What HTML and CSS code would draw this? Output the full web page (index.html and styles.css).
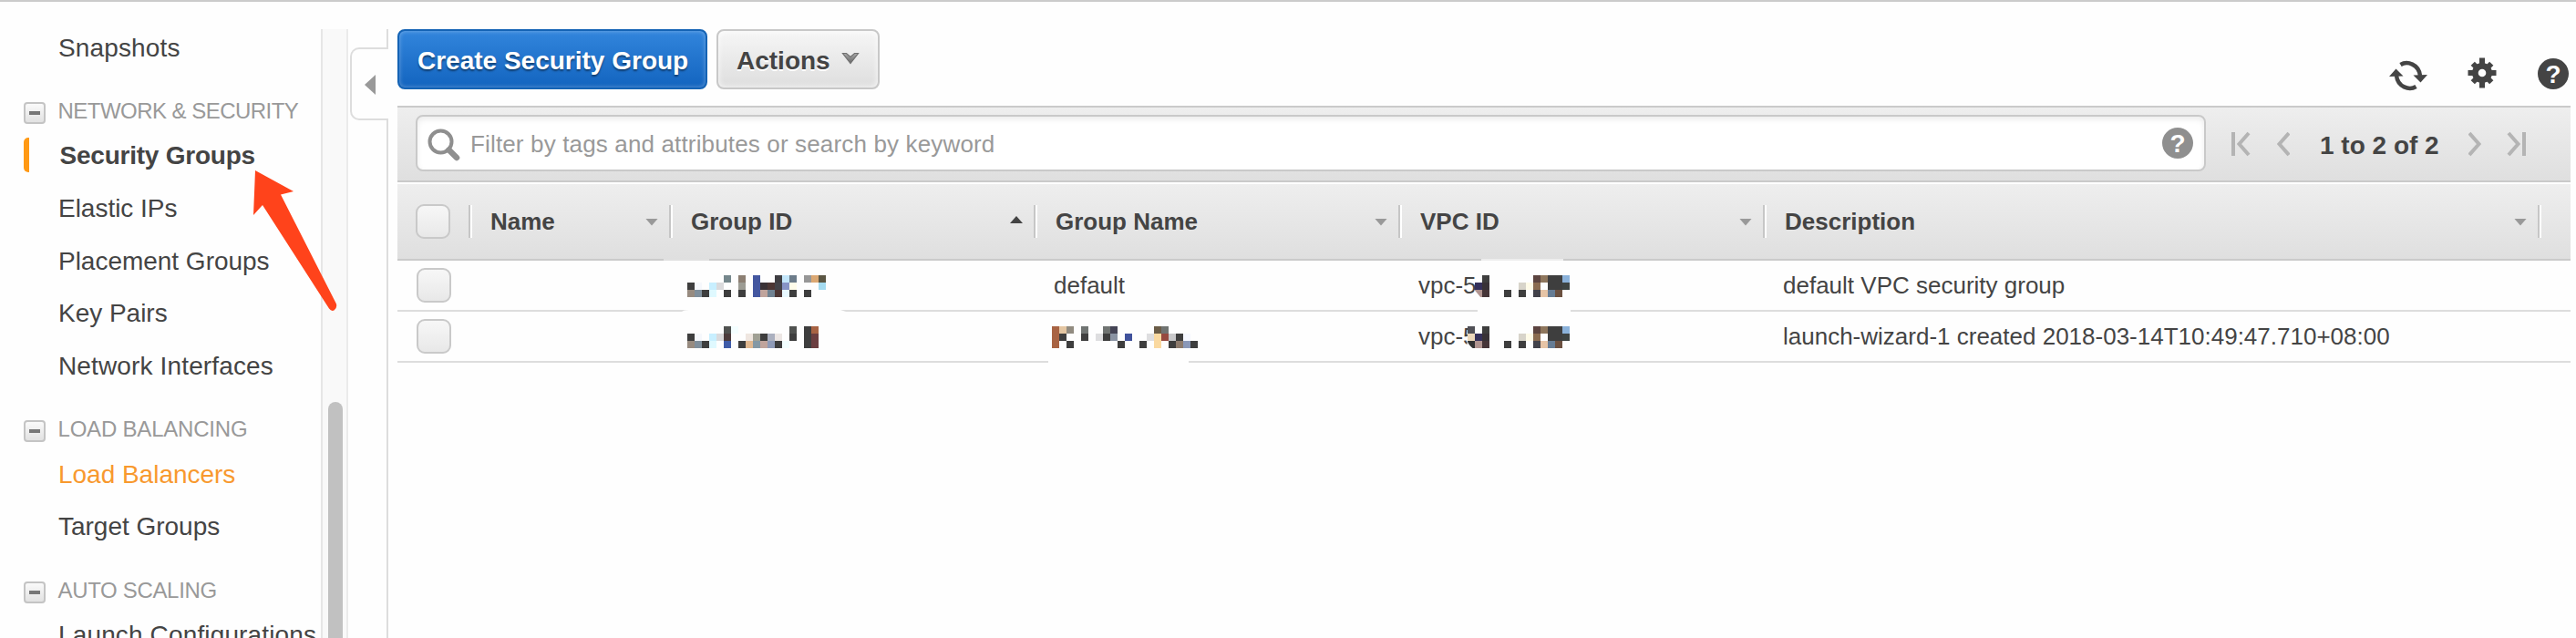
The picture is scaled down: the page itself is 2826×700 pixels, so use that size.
FILE: index.html
```html
<!DOCTYPE html>
<html lang="en">
<head>
<meta charset="utf-8">
<title>Security Groups</title>
<link rel="stylesheet" href="styles.css">
</head>
<body>
<div class="app">
  <nav class="sidebar">
    <a class="nav-item">Snapshots</a>
    <div class="nav-heading"><span class="toggle"></span><span class="ls-network">NETWORK &amp; SECURITY</span></div>
    <a class="nav-item active">Security Groups</a>
    <a class="nav-item tight">Elastic IPs</a>
    <a class="nav-item tight">Placement Groups</a>
    <a class="nav-item tight">Key Pairs</a>
    <a class="nav-item">Network Interfaces</a>
    <div class="nav-heading"><span class="toggle"></span><span class="ls-load">LOAD BALANCING</span></div>
    <a class="nav-item hover tight">Load Balancers</a>
    <a class="nav-item tight">Target Groups</a>
    <div class="nav-heading"><span class="toggle"></span><span class="ls-auto">AUTO SCALING</span></div>
    <a class="nav-item">Launch Configurations</a>
  </nav>
  <div class="scrollbar"><div class="thumb"></div></div>
  <div class="divider">
    <div class="line-top"></div>
    <div class="collapse"><svg width="14" height="24" viewBox="0 0 14 24"><path d="M13 1v22L1 12z" fill="#999"/></svg></div>
    <div class="line-bottom"></div>
  </div>
  <main class="main">
    <div class="toolbar">
      <button class="btn primary">Create Security Group</button>
      <button class="btn">Actions
        <svg class="caret" width="20" height="14" viewBox="0 0 20 14"><defs><linearGradient id="cg" x1="0" x2="0" y1="0" y2="1"><stop offset="0" stop-color="#aaa"/><stop offset="1" stop-color="#666"/></linearGradient></defs><path d="M1.500 1.500h4L10 5.500l4.500-4h4L10 12.500z" fill="url(#cg)" stroke="#707070" stroke-width="1.200"/></svg>
      </button>
      <div class="tools">
        <svg class="i-refresh" width="42" height="34" viewBox="0 0 42 34"><g fill="none" stroke="#444" stroke-width="4.500"><path d="M12.500 5C20 .5 32.500 4.500 34 17"/><path d="M29.500 29C22 33.500 9.500 29.500 8 17"/></g><path d="M26.500 16.500L42 16L34.500 24.500zM15.500 17.500L0 18L7.500 9.500z" fill="#444"/></svg>
        <svg class="i-gear" width="32" height="34" viewBox="-16 -17 32 34"><g fill="#444"><circle r="11"/><rect x="-3" y="-16.500" width="6" height="33"/><rect x="-15.500" y="-3" width="31" height="6"/><g transform="rotate(45)"><rect x="-3" y="-14.500" width="6" height="29"/><rect x="-14.500" y="-3" width="29" height="6"/></g></g><circle r="4.300" fill="#fefefe"/></svg>
        <svg width="34" height="34" viewBox="0 0 34 34"><circle cx="17" cy="17" r="17" fill="#444"/><text x="17" y="27" class="q">?</text></svg>
      </div>
    </div>
    <div class="filterbar">
      <div class="search">
        <svg class="i-search" width="36" height="36" viewBox="0 0 36 36"><circle cx="14.500" cy="14.500" r="12" fill="none" stroke="#8f8f8f" stroke-width="4"/><path d="M23.500 23.500L32 32" stroke="#8f8f8f" stroke-width="6.500" stroke-linecap="round"/></svg>
        <span class="placeholder">Filter by tags and attributes or search by keyword</span>
        <svg width="34" height="34" viewBox="0 0 34 34"><circle cx="17" cy="17" r="17" fill="#8f8f8f"/><text x="17" y="27" class="q">?</text></svg>
      </div>
      <div class="pager">
        <svg width="64" height="28" viewBox="0 0 64 28" class="pg"><path d="M2 1v26M19 2L8.500 14L19 26M63 2L52.500 14L63 26"/></svg>
        <span class="range">1 to 2 of 2</span>
        <svg width="63" height="28" viewBox="0 0 63 28" class="pg"><path d="M1 2L11.500 14L1 26M44 2L54.500 14L44 26M61 1v26"/></svg>
      </div>
    </div>
    <div class="grid head">
      <div class="check-cell"><span class="check"></span></div>
      <div class="th"><span>Name</span><i class="sort"></i></div>
      <div class="th"><span>Group ID</span><i class="sort up"></i></div>
      <div class="th"><span>Group Name</span><i class="sort"></i></div>
      <div class="th"><span>VPC ID</span><i class="sort"></i></div>
      <div class="th wide"><span>Description</span><i class="sort"></i></div>
      <div class="th end"></div>
    </div>
    <div class="grid row">
      <div class="check-cell"><span class="check"></span></div>
      <div class="td"></div>
      <div class="td"><svg class="redact" data-key="id1" width="212" height="60"></svg></div>
      <div class="td">default</div>
      <div class="td">vpc-5<svg class="redact" data-key="vpc1" width="212" height="60"></svg></div>
      <div class="td">default VPC security group</div>
    </div>
    <div class="grid row">
      <div class="check-cell"><span class="check"></span></div>
      <div class="td"></div>
      <div class="td"><svg class="redact" data-key="id2" width="212" height="60"></svg></div>
      <div class="td"><svg class="redact" data-key="name2" width="212" height="60"></svg></div>
      <div class="td">vpc-5<svg class="redact" data-key="vpc2" width="212" height="60"></svg></div>
      <div class="td">launch-wizard-1 created 2018-03-14T10:49:47.710+08:00</div>
    </div>
  </main>
  <svg class="pointer" width="100" height="164" viewBox="275 183 100 164"><path d="M280 187L322 210L308 213.500L369 333.500Q370 338 366.500 340.500Q363.500 342 361 338.500L288 225L278 236z" fill="#ff431b"/></svg>
</div>
<script src="redact.js"></script>
</body>
</html>
```
FILE: styles.css
```css
* { box-sizing: border-box; }
body { margin: 0; background: #fefefe; color: #444; font-family: "Liberation Sans", Arial, sans-serif; }
svg { display: block; flex: none; }
.app { position: relative; display: flex; width: 2826px; height: 700px; overflow: hidden; border-top: 2px solid #cbcbcb; }

.sidebar { width: 352px; flex: none; padding: 21.5px 0 0 26px; }
.nav-item { display: flex; align-items: center; height: 57.6px; padding-left: 38px; font-size: 28px; letter-spacing: .14px; line-height: 57.6px; white-space: nowrap; }
.nav-item.tight { letter-spacing: -.02px; }
.nav-item.active { padding-left: 0; font-weight: bold; letter-spacing: -.23px; }
.nav-item.active::before { content: ""; width: 6px; height: 38px; margin: 0 33.500px 3px 0; background: #ff9914; border-radius: 5px 0 0 5px; }
.nav-item.hover { color: #f8992e; }
.nav-heading { display: flex; align-items: center; height: 40.600px; margin-top: 20.800px; font-size: 24px; line-height: 40.600px; color: #999; white-space: nowrap; }
.ls-network { letter-spacing: -.53px; }
.ls-load { letter-spacing: -.2px; }
.ls-auto { letter-spacing: -.33px; }
.toggle { display: flex; align-items: center; justify-content: center; width: 24px; height: 24px; margin: 3px 13.500px 0 0; border: 2px solid #c4c4c4; border-radius: 4px; background: linear-gradient(#fafafa, #e2e2e2); }
.toggle::before { content: ""; width: 12px; height: 4px; background: #777; }

.scrollbar { width: 30px; flex: none; margin-top: 30px; padding: 409px 0 0 6px; background: #f9f9f9; border-left: 2px solid #e6e6e6; border-right: 2px solid #ebebeb; }
.thumb { width: 16px; height: 300px; border-radius: 8px; background: #c1c1c1; }

.divider { display: flex; flex-direction: column; width: 42px; flex: none; margin: 30px 0 0 2px; }
.line-top, .line-bottom { align-self: flex-end; width: 2px; background: #ddd; }
.line-top { height: 20px; }
.line-bottom { flex: 1; }
.collapse { display: flex; align-items: center; height: 80px; padding: 2px 0 0 13px; border: 2px solid #ddd; border-right: 0; border-radius: 10px 0 0 10px; }

.main { width: 2384px; flex: none; margin: 30px 0 0 10px; }
.toolbar { display: flex; gap: 10px; height: 84px; }
.btn { display: flex; align-items: center; height: 66px; padding: 3px 20px 0 20px; border: 2px solid #c8c8c8; border-radius: 8px; background: linear-gradient(#f6f6f6, #dedede); box-shadow: inset 0 0 6px rgba(255,255,255,.9); color: #444; font: bold 28px "Liberation Sans", Arial, sans-serif; text-shadow: 0 2px 0 #fff; white-space: nowrap; }
.btn.primary { width: 340px; border-color: #1463b5; background: linear-gradient(#3285dc, #1364bf); box-shadow: inset 0 0 5px rgba(255,255,255,.35); color: #fff; text-shadow: 0 2px 2px rgba(0,0,0,.45); }
.btn:not(.primary) { width: 179px; }
.caret { margin: -5px 0 0 12px; }
.tools { display: flex; align-items: flex-start; margin: 32px 2px 0 auto; }
.i-refresh { margin: 2px 44px 0 0; }
.i-gear { margin: -1px 45px 0 0; }
.q { fill: #fefefe; font: bold 28px "Liberation Sans", Arial, sans-serif; text-anchor: middle; }

.filterbar { display: flex; height: 84px; padding: 8px 0 0 20px; border: solid #cacaca; border-width: 2px 0; background: linear-gradient(#eee, #dfdfdf); }
.search { display: flex; align-items: center; width: 1964px; height: 62px; padding: 0 12px 0 11px; border: 2px solid #c9c9c9; border-radius: 8px; background: #fff; box-shadow: inset 0 3px 6px rgba(0,0,0,.08); }
.i-search { margin-top: 3px; }
.placeholder { margin: 2px auto 0 11px; color: #999; font-size: 26px; letter-spacing: .15px; }
.pager { display: flex; align-items: center; height: 64px; margin-left: 28px; }
.pg { fill: none; stroke: #b4b4b4; stroke-width: 4; }
.range { margin: 3px 32px 0 33px; font-size: 28px; font-weight: bold; white-space: nowrap; }

.grid { display: grid; grid-template-columns: 78px 220px 400px 400px 400px 850px 36px; align-items: center; }
.head { height: 86px; border-top: 2px solid #fff; border-bottom: 2px solid #cacaca; background: linear-gradient(#eee, #dfdfdf); font-size: 26px; font-weight: bold; }
.th { display: flex; align-items: center; justify-content: space-between; height: 36px; padding: 0 12px 0 19px; border-left: 2px solid #c6c6c6; box-shadow: inset 2px 0 0 #fff; }
.th span { padding-left: 3px; }
.th.end .sort { display: none; }
.sort { width: 14px; height: 8px; margin-top: 1px; background: #999; clip-path: polygon(0 0, 100% 0, 50% 100%); }
.sort.up { margin-top: -4px; background: #444; clip-path: polygon(50% 0, 100% 100%, 0 100%); }
.check-cell { padding-left: 20px; }
.check { display: block; width: 38px; height: 38px; border: 2px solid #c9c9c9; border-radius: 9px; background: linear-gradient(#f7f7f7, #e8e8e8); }
.row .check { margin-left: 1px; }
.row { height: 56px; border-bottom: 2px solid #ddd; font-size: 26px; }
.td { position: relative; height: 54px; padding-left: 22px; line-height: 54px; white-space: nowrap; }
.redact { position: absolute; left: -12px; top: -2px; }
.pointer { position: absolute; left: 275px; top: 181px; }
```
FILE: redact.js
```
// Masked identifiers: three rows of 8px blocks, given as "column:colour".
const masks = {
  id1: {
    x: 32,
    patches: '<rect x="6" width="50" height="2" fill="#e0e0e0"/><path d="M26 58Q28 56 34 56H200L206 58z" fill="#fefefe"/>',
    rows: [
      '5:75878c 7:8c7f73 9:4457a0 12:3f3e42 13:c3e6fa 14:6c7c8a 16:979797 17:dba873 18:5b5643',
      '0:3e3e3e 1:f6f8fc 3:c8efff 4:dadadc 7:9c9c94 9:4457a0 10:3a3236 11:4c3634 12:424248 13:8794c6 14:fffcea 18:a4dbf0',
      '0:978b80 1:7f8f9c 2:3e3e3e 3:dff9ff 5:3e3e3e 7:3e3e3e 9:4457a0 10:c0a49c 11:708292 12:4c3634 13:e8f8ff 14:3e3e3e 16:3e3e3e'
    ]
  },
  id2: {
    x: 32,
    patches: '',
    rows: [
      '5:505250 6:f4feff 14:505250 16:3e3e3e 17:a86343',
      '0:3e3e3e 1:f6f8fc 3:c8efff 4:dadadc 5:4c3c3c 8:efe6e0 9:a0a094 10:3e3e3e 11:abb0bf 12:ece6e4 14:3e3e3e 16:3e3e3e 17:6c3e40',
      '0:978b80 1:7f8f9c 2:3e3e3e 3:dff9ff 5:3f5ca8 7:3e3e3e 8:e0b890 9:8498a4 10:c0a49c 11:8f9bb8 12:3e3e3e 13:f2feff 16:3e3e3e 17:6c3e40'
    ]
  },
  name2: {
    x: 32,
    patches: '<path d="M28 56H182V58H28z" fill="#fefefe"/>',
    rows: [
      '0:a86343 1:e4c6a2 2:918b80 4:707472 7:707472 8:444455 14:6a5c47 15:707472',
      '0:a86343 1:3e3e3e 4:3e3e3e 6:dedee0 7:3e3e3e 8:8a93a3 10:40529c 13:dedee0 14:fad9a0 15:964a40 16:c8c8ca 17:3e3e3e 18:f6f8ff',
      '0:a86343 2:3e3e3e 9:3e3e3e 12:3e3e3e 14:fad9a0 16:3e3e3e 17:8c7a6c 18:8a98b8 19:3e3e3e'
    ]
  },
  vpc1: {
    x: 88,
    patches: '<rect x="103" width="90" height="2" fill="#ededed"/><path d="M99 56H201V58H99z" fill="#fefefe"/><rect x="97" y="14" width="95" height="34" fill="#fefefe"/>',
    cover: '<path d="M95.500 34L103 43H95.500z" fill="#fefefe"/>',
    rows: [
      '2:3e3e3e 9:5c4440 10:8e765c 11:3e3e3e 12:3e3e3e 13:8bb2da',
      '1:34305a 2:383236 7:d8d4ca 8:fffbe8 9:8a6b50 11:3e3e3e 12:3e3e3e 13:3e4442',
      '1:b09490 2:463538 5:3e3e3e 7:3e3e3e 9:42424a 10:e6c4a6 11:667c94 12:6b5040'
    ]
  },
  vpc2: {
    x: 88,
    patches: '<rect x="88" y="14" width="104" height="34" fill="#fefefe"/>',
    cover: '<path d="M87.500 34Q90 40 95 43H87.500z" fill="#fefefe"/>',
    rows: [
      '0:505056 2:3e3e3e 9:5c4440 10:8e765c 11:3e3e3e 12:3e3e3e 13:8bb2da',
      '0:ecd8ba 1:34305a 2:383236 7:d8d4ca 8:fffbe8 9:8a6b50 11:3e3e3e 12:3e3e3e 13:3e4442',
      '0:333333 1:b09490 2:463538 5:3e3e3e 7:3e3e3e 9:42424a 10:e6c4a6 11:667c94 12:6b5040'
    ]
  }
};

for (const svg of document.querySelectorAll('.redact')) {
  const mask = masks[svg.dataset.key];
  let markup = mask.patches;
  mask.rows.forEach((row, r) => {
    for (const block of row.split(' ')) {
      const [col, colour] = block.split(':');
      markup += `<rect x="${mask.x + col * 8}" y="${18 + r * 8}" width="8" height="8" fill="#${colour}"/>`;
    }
  });
  svg.innerHTML = markup + (mask.cover || '');
}
```
